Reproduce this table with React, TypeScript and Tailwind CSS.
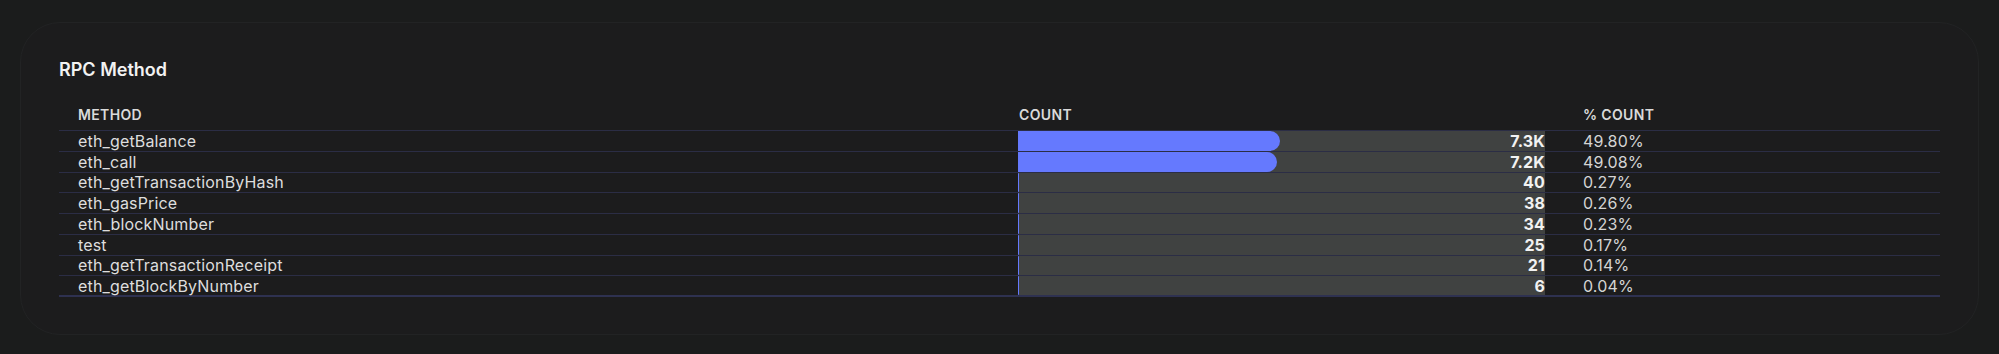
import React from 'react';

interface IRow {
  method: string;
  count: string;
  pct: number;
}

const rows: IRow[] = [
  { method: 'eth_getBalance', count: '7.3K', pct: 49.8 },
  { method: 'eth_call', count: '7.2K', pct: 49.08 },
  { method: 'eth_getTransactionByHash', count: '40', pct: 0.27 },
  { method: 'eth_gasPrice', count: '38', pct: 0.26 },
  { method: 'eth_blockNumber', count: '34', pct: 0.23 },
  { method: 'test', count: '25', pct: 0.17 },
  { method: 'eth_getTransactionReceipt', count: '21', pct: 0.14 },
  { method: 'eth_getBlockByNumber', count: '6', pct: 0.04 },
];

const App = () => {
  return (
    <div
      className="w-[1999px] h-[354px] bg-[#1b1c1c] pt-[22px] px-[20px]"
      style={{ fontFamily: 'Inter, "Noto Sans", sans-serif' }}>
      <div className="h-[313px] rounded-[40px] border border-[#222324] bg-[#1c1c1d] px-[38px] pt-[33px]">
        <h2 className="text-[18px] leading-[28px] font-semibold text-[#f2f2f2]">RPC Method</h2>
        <div className="mt-[23px]">
          <div className="flex border-b border-[#2b2d45] text-[14px] leading-[16px] font-semibold tracking-wide text-[#dadada] pb-[7px]">
            <div className="w-[959px] pl-[19px]">METHOD</div>
            <div className="w-[527px] pl-[1px]">COUNT</div>
            <div className="flex-1 pl-[38px]">% COUNT</div>
          </div>
          {rows.map((row, i) => (
            <div
              key={row.method}
              className={`flex h-[20.75px] text-[16px] tracking-[0.01em] ${
                i === rows.length - 1 ? 'border-b-2 border-[#2e3150]' : 'border-b border-[#2b2d45]'
              }`}>
              <div className="w-[959px] pl-[19px] flex items-center text-[#dedede]">{row.method}</div>
              <div className="w-[527px] flex bg-[#404241]">
                <div
                  className="h-full bg-[#6579fe] rounded-r-full min-w-[1px]"
                  style={{ width: `${row.pct}%` }}
                />
                <div className="flex-1 flex items-center justify-end font-bold text-[#f2f2f2]">{row.count}</div>
              </div>
              <div className="flex-1 pl-[38px] flex items-center text-[#d4d4d4]">{row.pct.toFixed(2)}%</div>
            </div>
          ))}
        </div>
      </div>
    </div>
  );
};

export default App;
